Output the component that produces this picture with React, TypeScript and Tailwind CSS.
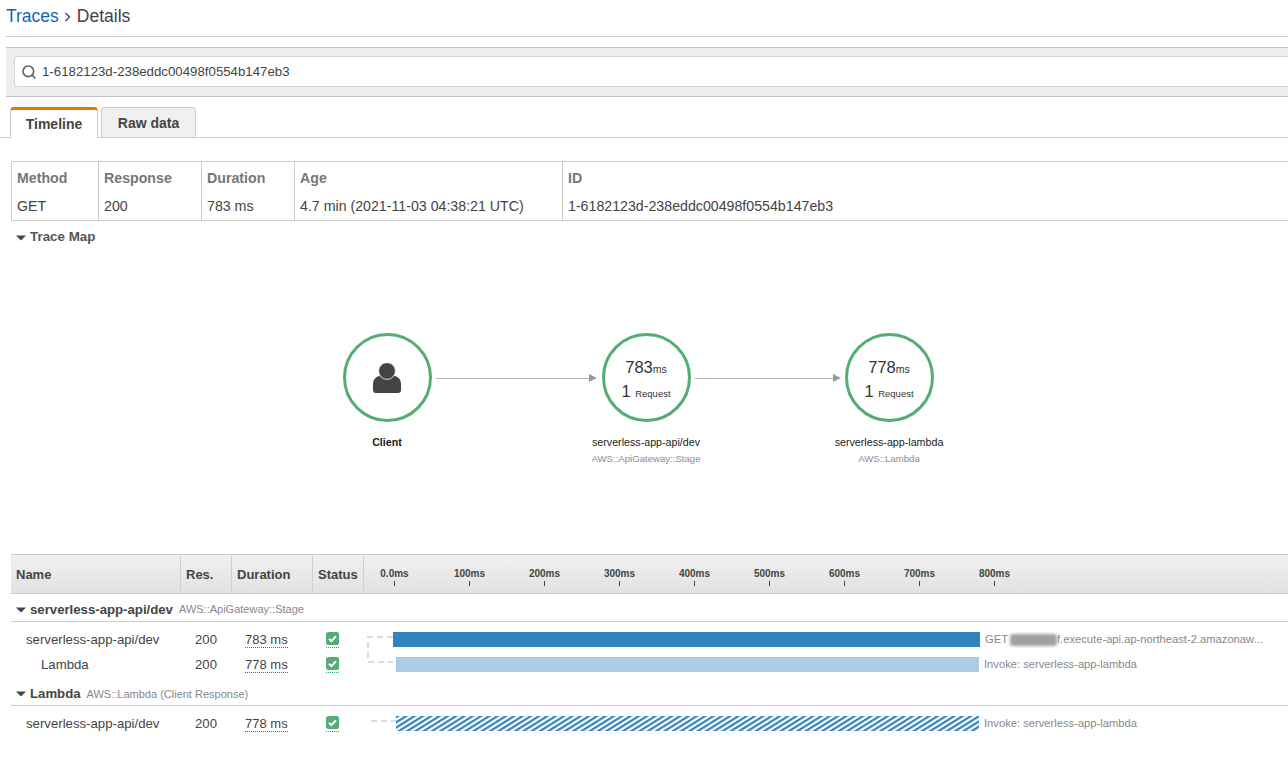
import React from "react";
import { Search } from "lucide-react";

const summary = [
  { label: "Method", value: "GET", width: "w-[87px] border-r" },
  { label: "Response", value: "200", width: "w-[103px] border-r" },
  { label: "Duration", value: "783 ms", width: "w-[93px] border-r" },
  { label: "Age", value: "4.7 min (2021-11-03 04:38:21 UTC)", width: "w-[268px] border-r" },
  { label: "ID", value: "1-6182123d-238eddc00498f0554b147eb3", width: "flex-1" },
];

const ticks = ["0.0ms", "100ms", "200ms", "300ms", "400ms", "500ms", "600ms", "700ms", "800ms"];

const Caret = () => (
  <svg width="10" height="6" viewBox="0 0 10 6" className="shrink-0">
    <path d="M0 0.5h10L5 5.5z" fill="#444" />
  </svg>
);

const StatusOk = () => (
  <span className="flex h-[16px] w-[13px] items-start border-b border-dotted border-[#3f9c63]">
    <svg width="13" height="13" viewBox="0 0 13 13">
      <rect width="13" height="13" rx="2.5" fill="#56ab76" />
      <path d="M3 6.800l2.400 2.300L10 4.200" fill="none" stroke="#fff" strokeWidth="2" />
    </svg>
  </span>
);

const MapNode = ({
  x,
  ms,
  name,
  type,
}: {
  x: string;
  ms?: string;
  name: string;
  type?: string;
}) => (
  <div className={`absolute top-[112px] flex w-[160px] flex-col items-center ${x}`}>
    <div className="flex h-[89px] w-[89px] flex-col items-center justify-center rounded-full border-[3px] border-[#56ad74] bg-white">
      {ms ? (
        <div className="pt-[5px] text-center text-[#333]">
          <div className="text-[16.5px] leading-[20px]">
            {ms}
            <span className="text-[10.5px]">ms</span>
          </div>
          <div className="mt-[2px] text-[16.5px] leading-[20px]">
            1 <span className="text-[9.5px]">Request</span>
          </div>
        </div>
      ) : (
        <svg width="28" height="30" viewBox="0 0 28 30">
          <path
            d="M0 21c0-5 4-8.500 9-8.500h10c5 0 9 3.500 9 8.500v6c0 2-1 3-3 3H3c-2 0-3-1-3-3z"
            fill="#444"
          />
          <circle cx="14" cy="8" r="8.400" fill="#444" stroke="#fff" strokeWidth="0.8" />
        </svg>
      )}
    </div>
    <div className={`mt-[13px] text-[10.7px] leading-[14px] text-[#222] ${type ? "" : "font-bold"}`}>{name}</div>
    {type && <div className="mt-[3px] text-[9.6px] leading-[14px] text-[#8a8a9e]">{type}</div>}
  </div>
);

const Arrow = ({ x }: { x: string }) => (
  <div className={`absolute top-[153px] flex items-center ${x}`}>
    <div className="h-[1px] flex-1 bg-[#b5b5b5]" />
    <svg width="8" height="8" viewBox="0 0 8 8" className="shrink-0">
      <path d="M0 0l8 4-8 4z" fill="#999" />
    </svg>
  </div>
);

const Row = ({
  name,
  indent,
  duration,
  children,
}: {
  name: string;
  indent: string;
  duration: string;
  children: React.ReactNode;
}) => (
  <div className="flex h-[25px] items-center pl-[12px] text-[13.2px] text-[#444]">
    <div className={`w-[169px] ${indent}`}>{name}</div>
    <div className="w-[51px] pl-[14px]">200</div>
    <div className="w-[81px] pl-[13px]">
      <span className="border-b border-dotted border-[#1f6fb5] text-[13px] leading-[15px]">{duration}</span>
    </div>
    <div className="w-[50px] pl-[13px]">
      <StatusOk />
    </div>
    <div className="relative flex h-[15px] flex-1 items-center">{children}</div>
  </div>
);

const GroupHeader = ({ name, type, height }: { name: string; type: string; height: string }) => (
  <div className={`ml-[11px] flex items-center border-b border-[#ccc] pl-[5px] ${height}`}>
    <Caret />
    <span className="ml-[4px] text-[13.2px] font-bold text-[#444]">{name}</span>
    <span className="ml-[6px] text-[11px] text-[#888]">{type}</span>
  </div>
);

export default function App() {
  return (
    <div className="h-[766px] w-full overflow-hidden bg-white [font-family:'Liberation_Sans',Arial,sans-serif]">
      {/* breadcrumb */}
      <div className="ml-[6px] flex h-[37px] items-start border-b border-[#ccc] pt-[5px] text-[17.5px] leading-[22px]">
        <span className="text-[#1166bb]">Traces</span>
        <svg width="8" height="10" viewBox="0 0 8 10" className="ml-[5px] mr-[5px] mt-[7px]">
          <path d="M1.500 1l4 4-4 4" fill="none" stroke="#444" strokeWidth="1.300" />
        </svg>
        <span className="text-[#444]">Details</span>
      </div>

      {/* search */}
      <div className="ml-[6px] mt-[10px] flex h-[50px] items-center border-y border-[#c4c4c4] bg-[#eeeeee] pb-[1px] pl-[8px]">
        <div className="flex h-[31px] flex-1 items-center rounded-l-[4px] border border-r-0 border-[#d5d5d5] bg-white pl-[6px] text-[13.250px] text-[#444]">
          <Search size={16} strokeWidth={2.5} className="text-[#666]" />
          <span className="ml-[5px]">1-6182123d-238eddc00498f0554b147eb3</span>
        </div>
      </div>

      {/* tabs */}
      <div className="mt-[10px] flex h-[31px] items-end border-b border-[#ccc] pl-[10px]">
        <div className="-mb-[1px] flex h-[31px] w-[88px] items-center justify-center rounded-t-[4px] border-x border-t-[3px] border-x-[#ccc] border-t-[#e07b00] bg-white text-[14px] font-bold text-[#444]">
          Timeline
        </div>
        <div className="ml-[3px] flex h-[30px] w-[95px] items-center justify-center rounded-t-[4px] border-x border-t border-[#ccc] bg-[#f0f0f0] pt-[2px] text-[14px] font-bold text-[#444]">
          Raw data
        </div>
      </div>

      {/* summary */}
      <div className="ml-[11px] mt-[23px] flex h-[60px] border-y border-l border-[#ccc]">
        {summary.map((s) => (
          <div key={s.label} className={`border-[#ccc] pl-[5px] text-[14.200px] ${s.width}`}>
            <div className="pt-[8px] font-bold leading-[16px] text-[#777]">{s.label}</div>
            <div className="pt-[12px] leading-[16px] text-[#444]">{s.value}</div>
          </div>
        ))}
      </div>

      {/* trace map */}
      <div className="relative h-[333px]">
        <div className="ml-[16px] flex h-[32px] items-center pt-[1px]">
          <Caret />
          <span className="ml-[4px] text-[13.400px] font-bold text-[#555]">Trace Map</span>
        </div>
        <MapNode x="left-[307px]" name="Client" />
        <Arrow x="left-[436px] w-[161px]" />
        <MapNode x="left-[566px]" ms="783" name="serverless-app-api/dev" type="AWS::ApiGateway::Stage" />
        <Arrow x="left-[695px] w-[146px]" />
        <MapNode x="left-[809px]" ms="778" name="serverless-app-lambda" type="AWS::Lambda" />
      </div>

      {/* timeline header */}
      <div className="ml-[11px] flex h-[40px] border-y border-[#ccc] bg-[linear-gradient(#f0f0f0,#e2e2e2)] text-[13px] font-bold text-[#444]">
        <div className="flex w-[169px] items-center pl-[5px] pt-[2px]">Name</div>
        <div className="my-[1px] flex w-[51px] items-center border-l border-[#d0d0d0] pl-[5px] pt-[2px]">Res.</div>
        <div className="my-[1px] flex w-[81px] items-center border-l border-[#d0d0d0] pl-[5px] pt-[2px]">Duration</div>
        <div className="my-[1px] flex w-[51px] items-center border-l border-[#d0d0d0] pl-[5px] pt-[2px]">Status</div>
        <div className="my-[1px] flex flex-1 border-l border-[#d0d0d0]">
          {ticks.map((t, i) => (
            <div
              key={t}
              className={`flex w-[75px] shrink-0 flex-col items-center pt-[11px] ${i === 0 ? "ml-[-7px]" : ""}`}
            >
              <span className="text-[10px] leading-[13px]">{t}</span>
              <span className="mt-[1px] h-[5px] w-[1px] bg-[#444]" />
            </div>
          ))}
        </div>
      </div>

      {/* rows */}
      <GroupHeader name="serverless-app-api/dev" type="AWS::ApiGateway::Stage" height="h-[28px] pt-[4px]" />
      <div className="relative pt-[5px]">
        <svg width="30" height="30" viewBox="0 0 30 30" className="absolute left-[366px] top-[14px]">
          <path d="M27 1H2v25h25" fill="none" stroke="#dcdcdc" strokeWidth="2" strokeDasharray="6 4" />
        </svg>
        <Row name="serverless-app-api/dev" indent="pl-[14px]" duration="783 ms">
          <div className="ml-[30px] h-[15px] w-[587px] bg-[#3182bd]" />
          <span className="ml-[5px] text-[11.200px] text-[#888]">GET</span>
          <span className="ml-[2px] h-[12px] w-[47px] rounded-[3px] bg-[#a0a0a0] blur-[1.5px]" />
          <span className="text-[11.200px] text-[#888]">f.execute-api.ap-northeast-2.amazonaw...</span>
        </Row>
        <Row name="Lambda" indent="pl-[29px]" duration="778 ms">
          <div className="ml-[33px] h-[15px] w-[583px] bg-[#abcce4]" />
          <span className="ml-[5px] text-[11.200px] text-[#888]">Invoke: serverless-app-lambda</span>
        </Row>
      </div>
      <div className="h-[5px]" />
      <GroupHeader name="Lambda" type="AWS::Lambda (Client Response)" height="h-[24px] pt-[1px]" />
      <div className="relative pt-[5px]">
        <svg width="26" height="2" viewBox="0 0 26 2" className="absolute left-[371px] top-[14px]">
          <path d="M0 1h26" fill="none" stroke="#dcdcdc" strokeWidth="2" strokeDasharray="6 4" />
        </svg>
        <Row name="serverless-app-api/dev" indent="pl-[14px]" duration="778 ms">
          <svg width="583" height="15" className="ml-[33px] shrink-0">
            <defs>
              <pattern id="hatch" width="4.400" height="4.400" patternUnits="userSpaceOnUse" patternTransform="rotate(-32)">
                <rect width="4.400" height="2.200" fill="#3182bd" />
              </pattern>
            </defs>
            <rect width="583" height="15" fill="url(#hatch)" />
          </svg>
          <span className="ml-[5px] text-[11.200px] text-[#888]">Invoke: serverless-app-lambda</span>
        </Row>
      </div>
    </div>
  );
}
